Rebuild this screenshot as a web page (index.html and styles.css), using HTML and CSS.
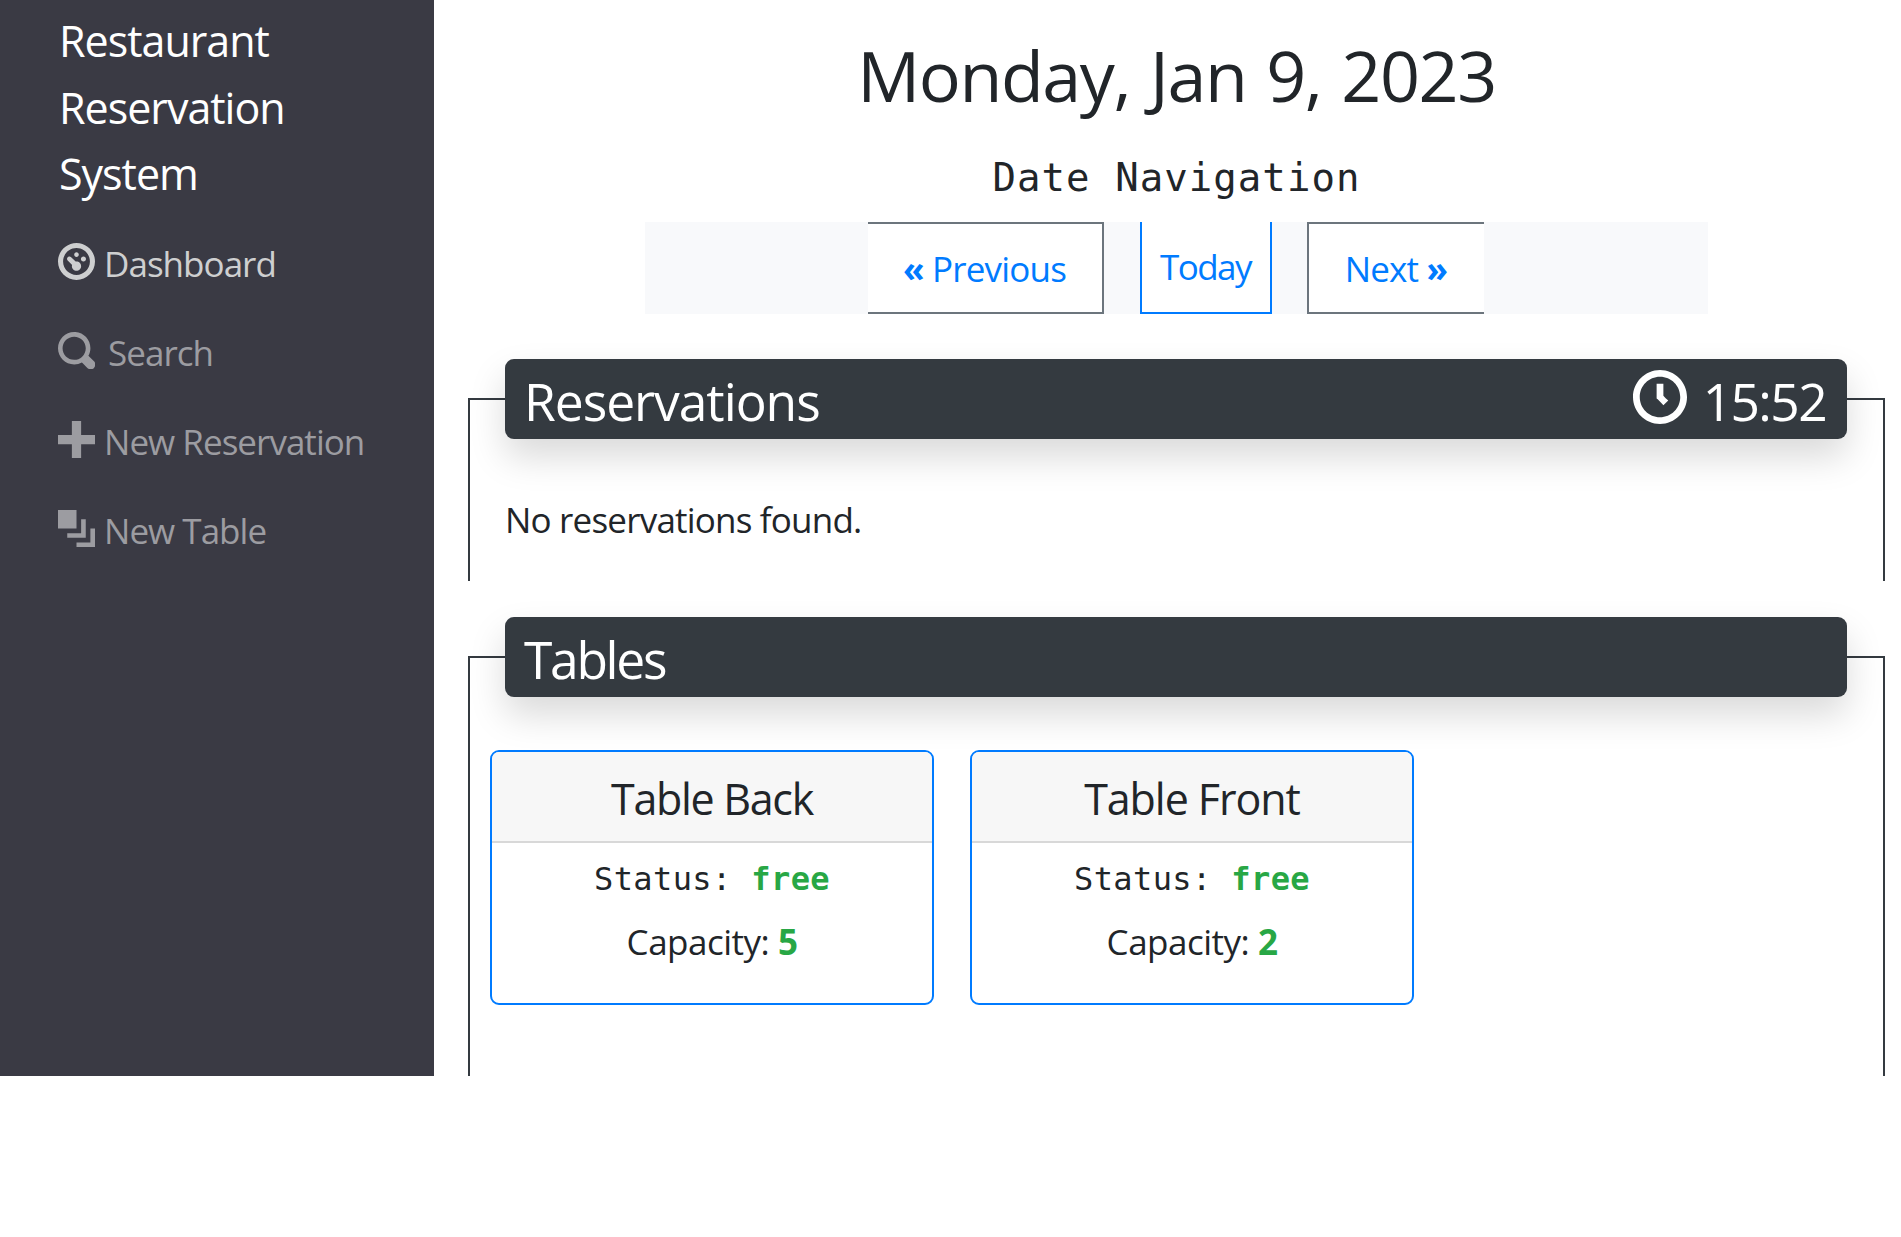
FILE: index.html
```
<!DOCTYPE html>
<html lang="en">
<head>
<meta charset="utf-8">
<title>Restaurant Reservation System</title>
<link rel="stylesheet" href="styles.css">
</head>
<body>
<div class="layout">
  <nav class="sidebar">
    <div class="brand">Restaurant Reservation System</div>
    <ul class="menu">
      <li class="item active">
        <svg class="icon" viewBox="0 0 8 8"><path d="M4 0c-2.2 0-4 1.8-4 4s1.8 4 4 4 4-1.8 4-4-1.8-4-4-4zm0 1.1c1.6 0 2.9 1.3 2.9 2.9s-1.3 2.9-2.9 2.9-2.9-1.3-2.9-2.9 1.3-2.9 2.9-2.9zm0 .9c-.28 0-.5.22-.5.5s.22.5.5.5.5-.22.5-.5-.22-.5-.5-.5zm-1.66.9a.55.55 0 0 0-.19.94l.91.91c-.02.08-.06.16-.06.25 0 .55.45 1 1 1s1-.45 1-1-.45-1-1-1c-.09 0-.1 0-.18.02l-.98-.96a.5.5 0 0 0-.44-.16.5.5 0 0 0-.06 0zm3.16 0c-.28 0-.55.22-.55.55s.22.55.55.55.55-.22.55-.55-.22-.55-.55-.55z"/></svg>
        <span>Dashboard</span>
      </li>
      <li class="item">
        <svg class="icon" viewBox="0 0 8 8"><path d="M3.5 0c-1.93 0-3.5 1.57-3.5 3.5s1.57 3.5 3.5 3.5c.59 0 1.17-.14 1.66-.41a1 1 0 0 0 .13.13l1 1a1.02 1.02 0 1 0 1.44-1.44l-1-1a1 1 0 0 0-.16-.13c.27-.49.44-1.06.44-1.66 0-1.93-1.55-3.5-3.5-3.5zm0 1c1.39 0 2.5 1.11 2.5 2.5 0 .66-.24 1.27-.66 1.72l-.03.03a1 1 0 0 0-.13.13c-.44.4-1.04.63-1.69.63-1.39 0-2.5-1.11-2.5-2.5s1.11-2.5 2.5-2.5z"/></svg>
        <span class="wide">Search</span>
      </li>
      <li class="item">
        <svg class="icon" viewBox="0 0 8 8"><path d="M3 0v3h-3v2h3v3h2v-3h3v-2h-3v-3h-2z"/></svg>
        <span>New Reservation</span>
      </li>
      <li class="item">
        <svg class="icon" viewBox="0 0 8 8"><path d="M0 0v4h4v-4h-4zm5 2v3h-3v1h4v-4h-1zm2 2v3h-3v1h4v-4h-1z"/></svg>
        <span>New Table</span>
      </li>
    </ul>
  </nav>
  <main class="main">
    <h1 class="date">Monday, Jan 9, 2023</h1>
    <h2 class="subtitle">Date Navigation</h2>
    <div class="pager">
      <a class="page prev"><span class="arrow">«</span> Previous</a>
      <a class="page today">Today</a>
      <a class="page next">Next <span class="arrow">»</span></a>
    </div>
    <section class="panel reservations">
      <header class="bar">
        <span>Reservations</span>
        <span class="clock">
          <svg class="clock-icon" viewBox="0 0 8 8"><path d="M4 0c-2.2 0-4 1.8-4 4s1.8 4 4 4 4-1.8 4-4-1.8-4-4-4zm0 1c1.66 0 3 1.34 3 3s-1.34 3-3 3-3-1.34-3-3 1.34-3 3-3zm-.5 1v2.22l.16.13.5.5.34.38.72-.72-.38-.34-.34-.34v-1.81h-1z"/></svg>
          <span class="time">15:52</span>
        </span>
      </header>
      <p class="empty">No reservations found.</p>
    </section>
    <section class="panel tables">
      <header class="bar"><span class="tables-title">Tables</span></header>
      <div class="cards">
        <article class="card">
          <h3 class="card-title back">Table Back</h3>
          <p class="status">Status: <b>free</b></p>
          <p class="capacity">Capacity: <b>5</b></p>
        </article>
        <article class="card">
          <h3 class="card-title">Table Front</h3>
          <p class="status">Status: <b>free</b></p>
          <p class="capacity">Capacity: <b>2</b></p>
        </article>
      </div>
    </section>
  </main>
</div>
</body>
</html>
```
FILE: styles.css
```
* { box-sizing: border-box; margin: 0; padding: 0; }
body {
  background: #fff;
  color: #212529;
  font: 35px "Open Sans", "Noto Sans", sans-serif;
  letter-spacing: -0.97px;
}
.layout { display: flex; height: 1076px; }

.sidebar { width: 434px; flex: none; background: #3a3a44; padding: 8px 58px 0; }
.brand { width: 240px; padding-left: 1px; color: #fff; font-size: 43px; line-height: 66.7px; letter-spacing: -1px; }
.menu { list-style: none; margin-top: 11px; }
.item {
  display: flex;
  align-items: center;
  gap: 9px;
  height: 89px;
  line-height: 89px;
  white-space: nowrap;
  color: #9c9ca1;
}
.item.active { color: #cecfd0; }
.icon { width: 37px; height: 37px; flex: none; margin-bottom: 5px; fill: currentColor; }
.wide { margin-left: 4px; }

.main { flex: 1; padding: 32px 16px 0 34px; }
.date { font-size: 70px; font-weight: 400; line-height: 86px; text-align: center; letter-spacing: -1.4px; word-spacing: 3px; }
.subtitle {
  margin: 30px 0 14px;
  font: 400 39px/60px "DejaVu Sans Mono", monospace;
  letter-spacing: 1.05px;
  text-align: center;
}
.pager {
  display: flex;
  justify-content: center;
  width: 1063px;
  height: 92px;
  margin: 0 auto;
  padding-right: 2px;
  background: #f8f9fb;
}
.page {
  height: 92px;
  line-height: 90px;
  background: #fff;
  color: #007bff;
  text-align: center;
  border: 2px solid #6c757d;
}
.prev { width: 236px; border-left: 0; letter-spacing: -0.8px; }
.today { width: 132px; margin: 0 35px 0 36px; border-color: #007bff; border-top: 0; letter-spacing: -1.5px; }
.next { width: 177px; border-right: 0; letter-spacing: -0.8px; }
.arrow { font-weight: 700; }

.panel { border: 2px solid #343a40; border-bottom: 0; }
.reservations { height: 183px; margin-top: 84px; }
.tables { height: 420px; margin-top: 75px; }
.bar {
  display: flex;
  justify-content: space-between;
  height: 80px;
  margin: -41px 36px 0 35px;
  padding: 0 21px 0 19px;
  border-radius: 9px;
  background: #343a40;
  color: #fff;
  font-size: 51.5px;
  line-height: 84px;
  letter-spacing: -1.03px;
  box-shadow: 0 18px 36px rgba(0, 0, 0, .15);
}
.clock { display: flex; gap: 16px; }
.clock-icon { width: 54px; height: 54px; margin-top: 11px; fill: #fff; }
.time { letter-spacing: -1.6px; }
.tables-title { letter-spacing: -2.3px; }
.empty { margin: 54px 0 0 35px; line-height: 54px; letter-spacing: -0.8px; }

.cards { display: flex; gap: 36px; padding: 53px 0 0 20px; }
.card {
  width: 444px;
  height: 255px;
  border: 2px solid #007bff;
  border-radius: 9px;
  background: #fff;
  text-align: center;
  overflow: hidden;
}
.card-title {
  height: 91px;
  padding-top: 1px;
  background: #f7f7f7;
  border-bottom: 2px solid #d8d8d8;
  font-size: 43px;
  font-weight: 400;
  line-height: 92px;
  letter-spacing: -1.07px;
}
.back { letter-spacing: -1.3px; }
.status { margin-top: 9px; font: 32px/54px "DejaVu Sans Mono", monospace; letter-spacing: 0.4px; }
.capacity { margin-top: 9px; line-height: 54px; letter-spacing: -0.5px; }
.card b { color: #28a745; }
```
